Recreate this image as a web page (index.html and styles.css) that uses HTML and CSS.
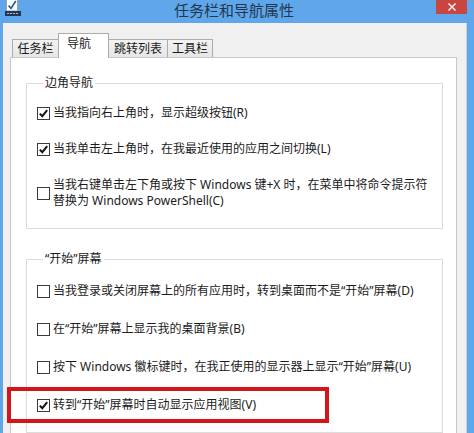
FILE: index.html
```html
<!DOCTYPE html>
<html lang="zh-CN">
<head>
<meta charset="utf-8">
<title>任务栏和导航属性</title>
<link rel="stylesheet" href="styles.css">
</head>
<body>
<div class="window">
  <div class="titlebar">
    <svg class="app-icon" width="16" height="16" viewBox="0 0 16 16">
      <rect x="1.5" y="-1" width="11" height="12" fill="#ffffff" stroke="#8fa6bf"/>
      <path d="M3.6 5.6 L6 8.4 L10.8 1" stroke="#2a5b96" stroke-width="1.7" fill="none"/>
      <rect x="0" y="11" width="16" height="5" fill="#26364f"/>
      <rect x="2" y="13" width="2" height="1" fill="#a8c0dc"/>
      <rect x="5" y="13" width="2" height="1" fill="#a8c0dc"/>
      <rect x="8" y="13" width="2" height="1" fill="#a8c0dc"/>
      <rect x="11" y="13" width="2" height="1" fill="#a8c0dc"/>
    </svg>
    <div class="title">任务栏和导航属性</div>
    <div class="close">
      <svg width="10" height="10" viewBox="0 0 10 10"><path d="M1.5 1.5 L8.5 8.5 M8.5 1.5 L1.5 8.5" stroke="#ffffff" stroke-width="1.4"/></svg>
    </div>
  </div>
  <div class="client">
    <div class="tabs">
      <div class="tab t1">任务栏</div>
      <div class="tab t2 active">导航</div>
      <div class="tab t3">跳转列表</div>
      <div class="tab t4">工具栏</div>
    </div>
    <div class="panel">
      <fieldset class="group g1">
        <legend>边角导航</legend>
        <div class="opts">
          <div class="row"><span class="cb on"><svg width="11" height="11" viewBox="0 0 11 11"><path d="M1.8 5.6 L4.3 8.2 L9.2 2.2" stroke="#111" stroke-width="2" fill="none"/></svg></span><span class="txt">当我指向右上角时，显示超级按钮(R)</span></div>
          <div class="row"><span class="cb on"><svg width="11" height="11" viewBox="0 0 11 11"><path d="M1.8 5.6 L4.3 8.2 L9.2 2.2" stroke="#111" stroke-width="2" fill="none"/></svg></span><span class="txt">当我单击左上角时，在我最近使用的应用之间切换(L)</span></div>
          <div class="row"><span class="cb"></span><span class="txt">当我右键单击左下角或按下 Windows 键+X 时，在菜单中将命令提示符<br>替换为 Windows PowerShell(C)</span></div>
        </div>
      </fieldset>
      <fieldset class="group g2">
        <legend>“开始”屏幕</legend>
        <div class="opts">
          <div class="row"><span class="cb"></span><span class="txt">当我登录或关闭屏幕上的所有应用时，转到桌面而不是“开始”屏幕(D)</span></div>
          <div class="row"><span class="cb"></span><span class="txt">在“开始”屏幕上显示我的桌面背景(B)</span></div>
          <div class="row"><span class="cb"></span><span class="txt">按下 Windows 徽标键时，在我正使用的显示器上显示“开始”屏幕(U)</span></div>
          <div class="row"><span class="cb on"><svg width="11" height="11" viewBox="0 0 11 11"><path d="M1.8 5.6 L4.3 8.2 L9.2 2.2" stroke="#111" stroke-width="2" fill="none"/></svg></span><span class="txt">转到“开始”屏幕时自动显示应用视图(V)</span></div>
        </div>
      </fieldset>
    </div>
  </div>
  <div class="highlight"></div>
</div>
</body>
</html>
```
FILE: styles.css
```css
html, body {
  margin: 0;
  padding: 0;
  height: 100%;
  overflow: hidden;
}
body {
  background: #5fa7ea;
  font-family: "Noto Sans", "Noto Sans CJK SC", sans-serif;
  font-size: 12px;
  color: #1b1b1b;
}
.window {
  position: relative;
  width: 474px;
  height: 433px;
  display: flex;
  flex-direction: column;
}
.titlebar {
  height: 23px;
  flex: none;
  display: flex;
  align-items: flex-start;
}
.app-icon {
  margin-left: 5px;
  flex: none;
}
.title {
  flex: 1;
  text-align: center;
  padding-left: 11px;
  font-family: "Noto Sans CJK SC", sans-serif;
  font-size: 15px;
  line-height: 20px;
  color: #23374c;
}
.close {
  width: 31px;
  height: 14px;
  margin-right: 7px;
  background: #c8463f;
  display: flex;
  align-items: center;
  justify-content: center;
}
.close svg {
  margin-top: -1px;
}
.client {
  flex: 1;
  background: #f0f0f0;
  margin: 0 7px 0 3px;
  border-right: 1px solid #d2d2d2;
  padding-top: 10px;
  display: flex;
  flex-direction: column;
}
.tabs {
  display: flex;
  align-items: flex-end;
  height: 25px;
  margin: 0 0 -1px 9px;
}
.tab {
  box-sizing: border-box;
  height: 18px;
  margin-bottom: 1px;
  line-height: 15px;
  text-align: center;
  border-top: 1px solid #acacac;
  background: linear-gradient(#f2f2f2, #e6e6e6);
  font-family: "Noto Sans CJK SC", sans-serif;
  color: #1b1b1b;
}
.t1 { width: 46px; border-left: 1px solid #acacac; }
.t2 { width: 51px; }
.t3 { width: 59px; border-right: 1px solid #acacac; }
.t4 { width: 45px; border-right: 1px solid #acacac; }
.tab.active {
  position: relative;
  z-index: 1;
  height: 25px;
  margin-bottom: 0;
  padding: 1px 0 0 8px;
  text-align: left;
  line-height: 16px;
  background: #ffffff;
  border-left: 1px solid #acacac;
  border-right: 1px solid #acacac;
}
.panel {
  flex: 1;
  background: #ffffff;
  border: 1px solid #c9c9c9;
  margin: 0 9px 0 7px;
  padding: 0 13px 0 15px;
}
.group {
  margin: 17px 0 0 0;
  padding: 0 0 19px 10px;
  border: 1px solid #dcdcdc;
  min-width: 0;
}
.g2 {
  margin-top: 22px;
}
.group legend {
  margin-left: 6px;
  padding: 0 2px;
  line-height: 16px;
}
.opts {
  display: flex;
  flex-direction: column;
}
.g1 .opts { padding-top: 14px; gap: 20px; }
.g2 .opts { padding-top: 16px; gap: 22px; }
.row {
  display: flex;
  align-items: center;
  white-space: nowrap;
}
.txt {
  line-height: 16px;
}
.cb {
  box-sizing: border-box;
  width: 13px;
  height: 13px;
  flex: none;
  border: 1px solid #3a3a3a;
  background: #ffffff;
  margin-right: 3px;
  display: flex;
  align-items: center;
  justify-content: center;
}
.highlight {
  position: absolute;
  left: 7px;
  top: 387px;
  width: 322px;
  height: 36px;
  box-sizing: border-box;
  border: 4px solid #d2161c;
}
```
